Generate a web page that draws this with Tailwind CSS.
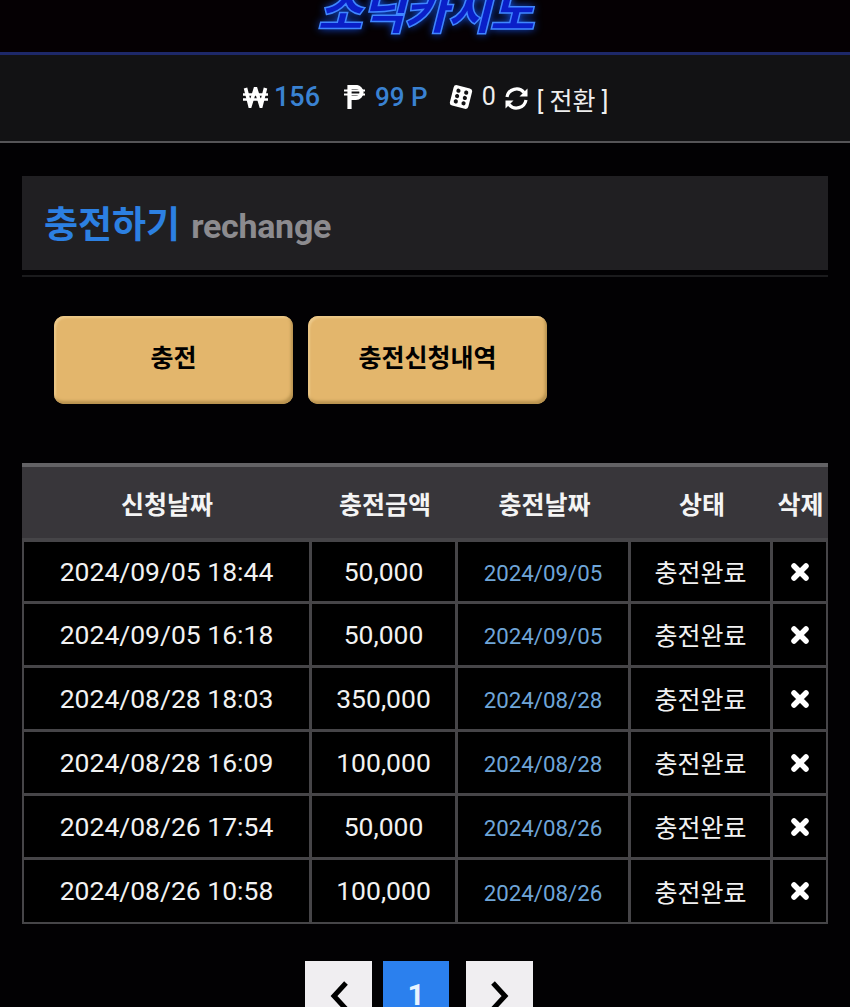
<!DOCTYPE html>
<html lang="ko">
<head>
<meta charset="UTF-8">
<meta name="viewport" content="width=device-width, initial-scale=1.0">
<script src="https://cdn.jsdelivr.net/npm/@tailwindcss/browser@4"></script>
</head>
<body class="bg-[#020103] font-['Roboto','Noto_Sans_CJK_KR',sans-serif]">
<div class="w-[850px] h-[1007px] overflow-hidden">

  <!-- 로고 -->
  <div class="h-[55px] bg-[#050003] border-b-[3px] border-[#1d2869] flex justify-center overflow-hidden">
    <div class="mt-[-17px] h-[60px] leading-[60px] text-[49px] font-black italic tracking-[-2px] text-[#0a1fc8] [-webkit-text-stroke:1.5px_#3f86ff] [text-shadow:0_0_9px_#1257ff]">소닉카지노</div>
  </div>

  <!-- 보유금액 -->
  <div class="h-[88px] bg-[#121214] border-b-2 border-[#555457] flex items-center pl-[243px] pb-[2px]">
    <svg width="25" height="21" viewBox="0 0 25 21" fill="none" stroke="#fff">
      <path d="M2.500 1l4.500 18 5.500-18 5.500 18 4.500-18" stroke-width="3.600"/>
      <path d="M0 7.500h25M0 12.500h25" stroke-width="2.400"/>
    </svg>
    <span class="ml-[6px] text-[27px] font-medium text-[#3a82d2]">156</span>
    <svg class="ml-[24px]" width="21" height="24" viewBox="0 0 21 24" fill="none" stroke="#fff">
      <path d="M5.500 24V2h6.500a5.500 5.500 0 0 1 0 11H5.500" stroke-width="4.200"/>
      <path d="M0 5.500h21M0 9.500h21" stroke-width="2"/>
    </svg>
    <span class="ml-[10px] text-[26px] font-medium text-[#3a82d2]">99 P</span>
    <svg class="ml-[21px]" width="24" height="24" viewBox="0 0 24 24">
      <rect x="2.500" y="1.500" width="19" height="21" rx="3" fill="#fff" transform="rotate(14 12 12)"/>
      <g fill="#121214" transform="rotate(14 12 12)">
        <circle cx="8" cy="6.500" r="2.100"/><circle cx="16" cy="6.500" r="2.100"/>
        <circle cx="8" cy="12" r="2.100"/><circle cx="16" cy="12" r="2.100"/>
        <circle cx="8" cy="17.500" r="2.100"/><circle cx="16" cy="17.500" r="2.100"/>
      </g>
    </svg>
    <span class="ml-[9px] text-[25px] text-[#eeeeee]">0</span>
    <svg class="ml-[8px] mt-[2px]" width="25" height="25" viewBox="0 0 25 25" fill="none" stroke="#fff" stroke-width="3.200">
      <path d="M3 11a9.700 9.700 0 0 1 17-4.500"/>
      <path d="M22 14a9.700 9.700 0 0 1-17 4.500"/>
      <path d="M23.500 2.500v8h-8z" fill="#fff" stroke="none"/>
      <path d="M1.500 22.500v-8h8z" fill="#fff" stroke="none"/>
    </svg>
    <span class="ml-[8px] mt-[10px] text-[25px] text-[#eeeeee]">[ 전환 ]</span>
  </div>

  <!-- 제목 -->
  <div class="mx-[22px] mt-[33px] border-b-2 border-[#1b1b1d]">
    <div class="h-[94px] mb-[5px] bg-[#201f22] flex items-center pl-[22px] pt-[5px] gap-[11px]">
      <span class="text-[37px] font-bold text-[#2c80e2]">충전하기</span>
      <span class="mt-[1px] text-[34px] font-bold text-[#8c8b8f] tracking-[-0.3px]">rechange</span>
    </div>
  </div>

  <!-- 버튼 -->
  <div class="mt-[39px] ml-[54px] flex gap-[15px]">
    <button class="w-[239px] h-[88px] pb-[2px] rounded-[10px] bg-[#e3b66c] shadow-[inset_-2px_-3px_3px_#b8924f,inset_2px_2px_2px_#ecc98a] text-[25px] font-bold text-black">충전</button>
    <button class="w-[239px] h-[88px] pb-[2px] rounded-[10px] bg-[#e3b66c] shadow-[inset_-2px_-3px_3px_#b8924f,inset_2px_2px_2px_#ecc98a] text-[25px] font-bold text-black">충전신청내역</button>
  </div>

  <!-- 내역 -->
  <table class="mt-[59px] ml-[22px] w-[806px] table-fixed border-separate border-spacing-0 text-center">
    <colgroup>
      <col class="w-[290px]"><col class="w-[146px]"><col class="w-[173px]"><col class="w-[142px]"><col class="w-[55px]">
    </colgroup>
    <thead>
      <tr class="h-[75px] bg-[#38363a] text-[25px] font-bold text-[#f4f4f4]">
        <th class="border-t-4 border-[#636265] font-bold pt-[6px]">신청날짜</th>
        <th class="border-t-4 border-[#636265] font-bold pt-[6px]">충전금액</th>
        <th class="border-t-4 border-[#636265] font-bold pt-[6px]">충전날짜</th>
        <th class="border-t-4 border-[#636265] font-bold pt-[6px]">상태</th>
        <th class="border-t-4 border-[#636265] font-bold pt-[6px]">삭제</th>
      </tr>
    </thead>
    <tbody class="text-[26.500px] text-[#f2f2f2]">
      <tr class="h-[66px]">
        <td class="border-t-4 border-l-2 border-r-[3px] border-b-[3px] border-[#464548] bg-black">2024/09/05 18:44</td>
        <td class="border-t-4 border-r-[3px] border-b-[3px] border-[#464548] bg-black">50,000</td>
        <td class="border-t-4 border-r-[3px] border-b-[3px] border-[#464548] bg-black pt-[5px] text-[22.300px] text-[#6fa5d8]">2024/09/05</td>
        <td class="border-t-4 border-r-[3px] border-b-[3px] border-[#464548] bg-black pt-[5px] text-[25px]">충전완료</td>
        <td class="border-t-4 border-r-2 border-b-[3px] border-[#464548] bg-black"><svg class="mx-auto" width="20" height="20" viewBox="0 0 20 20"><path d="M4 4l12 12M16 4L4 16" stroke="#fff" stroke-width="5.500" stroke-linecap="round"/></svg></td>
      </tr>
      <tr class="h-[64px]">
        <td class="border-l-2 border-r-[3px] border-b-[3px] border-[#464548] bg-black">2024/09/05 16:18</td>
        <td class="border-r-[3px] border-b-[3px] border-[#464548] bg-black">50,000</td>
        <td class="border-r-[3px] border-b-[3px] border-[#464548] bg-black pt-[5px] text-[22.300px] text-[#6fa5d8]">2024/09/05</td>
        <td class="border-r-[3px] border-b-[3px] border-[#464548] bg-black pt-[5px] text-[25px]">충전완료</td>
        <td class="border-r-2 border-b-[3px] border-[#464548] bg-black"><svg class="mx-auto" width="20" height="20" viewBox="0 0 20 20"><path d="M4 4l12 12M16 4L4 16" stroke="#fff" stroke-width="5.500" stroke-linecap="round"/></svg></td>
      </tr>
      <tr class="h-[64px]">
        <td class="border-l-2 border-r-[3px] border-b-[3px] border-[#464548] bg-black">2024/08/28 18:03</td>
        <td class="border-r-[3px] border-b-[3px] border-[#464548] bg-black">350,000</td>
        <td class="border-r-[3px] border-b-[3px] border-[#464548] bg-black pt-[5px] text-[22.300px] text-[#6fa5d8]">2024/08/28</td>
        <td class="border-r-[3px] border-b-[3px] border-[#464548] bg-black pt-[5px] text-[25px]">충전완료</td>
        <td class="border-r-2 border-b-[3px] border-[#464548] bg-black"><svg class="mx-auto" width="20" height="20" viewBox="0 0 20 20"><path d="M4 4l12 12M16 4L4 16" stroke="#fff" stroke-width="5.500" stroke-linecap="round"/></svg></td>
      </tr>
      <tr class="h-[64px]">
        <td class="border-l-2 border-r-[3px] border-b-[3px] border-[#464548] bg-black">2024/08/28 16:09</td>
        <td class="border-r-[3px] border-b-[3px] border-[#464548] bg-black">100,000</td>
        <td class="border-r-[3px] border-b-[3px] border-[#464548] bg-black pt-[5px] text-[22.300px] text-[#6fa5d8]">2024/08/28</td>
        <td class="border-r-[3px] border-b-[3px] border-[#464548] bg-black pt-[5px] text-[25px]">충전완료</td>
        <td class="border-r-2 border-b-[3px] border-[#464548] bg-black"><svg class="mx-auto" width="20" height="20" viewBox="0 0 20 20"><path d="M4 4l12 12M16 4L4 16" stroke="#fff" stroke-width="5.500" stroke-linecap="round"/></svg></td>
      </tr>
      <tr class="h-[64px]">
        <td class="border-l-2 border-r-[3px] border-b-[3px] border-[#464548] bg-black">2024/08/26 17:54</td>
        <td class="border-r-[3px] border-b-[3px] border-[#464548] bg-black">50,000</td>
        <td class="border-r-[3px] border-b-[3px] border-[#464548] bg-black pt-[5px] text-[22.300px] text-[#6fa5d8]">2024/08/26</td>
        <td class="border-r-[3px] border-b-[3px] border-[#464548] bg-black pt-[5px] text-[25px]">충전완료</td>
        <td class="border-r-2 border-b-[3px] border-[#464548] bg-black"><svg class="mx-auto" width="20" height="20" viewBox="0 0 20 20"><path d="M4 4l12 12M16 4L4 16" stroke="#fff" stroke-width="5.500" stroke-linecap="round"/></svg></td>
      </tr>
      <tr class="h-[64px]">
        <td class="border-l-2 border-r-[3px] border-b-2 border-[#464548] bg-black">2024/08/26 10:58</td>
        <td class="border-r-[3px] border-b-2 border-[#464548] bg-black">100,000</td>
        <td class="border-r-[3px] border-b-2 border-[#464548] bg-black pt-[5px] text-[22.300px] text-[#6fa5d8]">2024/08/26</td>
        <td class="border-r-[3px] border-b-2 border-[#464548] bg-black pt-[5px] text-[25px]">충전완료</td>
        <td class="border-r-2 border-b-2 border-[#464548] bg-black"><svg class="mx-auto" width="20" height="20" viewBox="0 0 20 20"><path d="M4 4l12 12M16 4L4 16" stroke="#fff" stroke-width="5.500" stroke-linecap="round"/></svg></td>
      </tr>
    </tbody>
  </table>

  <!-- 페이지 -->
  <div class="mt-[37px] ml-[305px] flex">
    <div class="w-[67px] h-[67px] bg-[#f0eef1] flex items-center justify-center pt-[3px]">
      <svg width="20" height="32" viewBox="0 0 20 32" fill="none" stroke="#000" stroke-width="5"><path d="M17 3L5 16l12 13"/></svg>
    </div>
    <div class="ml-[11px] w-[66px] h-[67px] bg-[#2b80ee] flex items-center justify-center text-[30px] font-bold text-[#e8f3ff]">1</div>
    <div class="ml-[17px] w-[67px] h-[67px] bg-[#f0eef1] flex items-center justify-center pt-[3px]">
      <svg width="20" height="32" viewBox="0 0 20 32" fill="none" stroke="#000" stroke-width="5"><path d="M3 3l12 13L3 29"/></svg>
    </div>
  </div>

</div>
</body>
</html>
